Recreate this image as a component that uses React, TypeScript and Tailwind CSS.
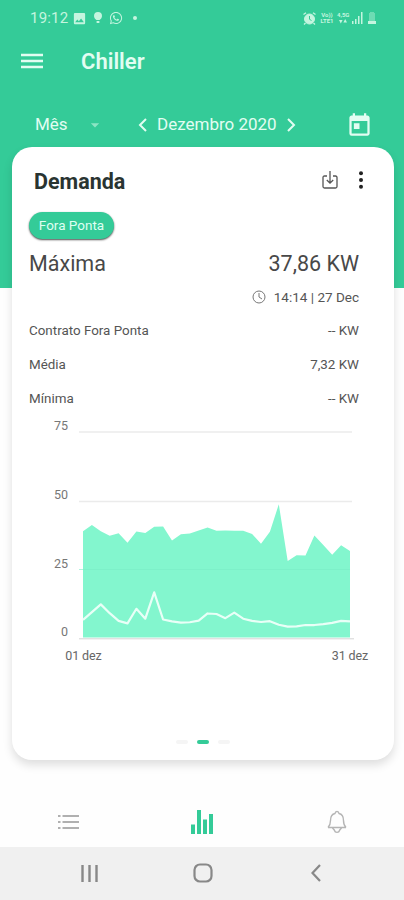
import { FaWhatsapp } from 'react-icons/fa';
import { MdImage, MdToday, MdArrowDropDown } from 'react-icons/md';

const peaks = [
  39, 41.3, 39, 37.4, 38.3, 34.8, 38.9, 38.4, 40.6, 40.7, 35.6, 37.9, 38.2, 39.3, 40.4, 39.2,
  39.3, 39.2, 39.2, 38, 34.5, 38.8, 48.8, 28.2, 30.3, 30.2, 37.5, 34, 30.5, 33.9, 31.8,
];

const averages = [
  6.8, 9.6, 12.4, 9.2, 6.4, 5.5, 10.8, 7.2, 16.8, 6.9, 6.2, 5.8, 5.9, 6.5, 9.1, 8.9,
  7.4, 9.4, 7.2, 6.4, 6, 6.3, 5, 4.3, 4.4, 4.9, 4.9, 5.2, 5.7, 6.4, 6.2,
];

const rows = [
  { label: 'Contrato Fora Ponta', value: '-- KW' },
  { label: 'Média', value: '7,32 KW' },
  { label: 'Mínima', value: '-- KW' },
];

// chart coordinates: 75 is at y=16, 0 is at y=223
const px = (i: number) => 54 + (i * 267) / 30;
const py = (v: number) => 222.5 - v * 2.75;
const toPoints = (values: number[]) => values.map((v, i) => `${px(i)},${py(v)}`).join(' ');

function StatusBar() {
  return (
    <div className="h-9 flex items-center pl-[30px] pr-7 text-[#c4f5df]">
      <span className="text-[15px] tracking-[0.2px] w-[38px]">19:12</span>
      <MdImage className="ml-[4px]" size={15} />
      <svg className="ml-[6px]" width="10" height="14" viewBox="0 0 10 14" fill="currentColor">
        <path d="M5 1a4 4 0 0 0-4 4c0 2 1.3 3 2.4 4h3.2C7.700 8 9 7 9 5a4 4 0 0 0-4-4zM3.600 10h2.800v2H3.600z" />
      </svg>
      <FaWhatsapp className="ml-[6px]" size={14} />
      <span className="ml-[10px] w-1 h-1 rounded-full bg-[#c4f5df]" />
      <div className="ml-auto flex items-center">
        <svg width="13" height="13" viewBox="0 0 13 13" fill="none" stroke="currentColor">
          <circle cx="6.500" cy="7" r="5" fill="currentColor" />
          <path d="M.5 2.500 3 .7M12.500 2.500 10 .7M2.500 11 1 12.500M10.500 11l1.500 1.500" strokeWidth="1.300" />
          <path d="M6.500 4v3.300L8.500 8.500" stroke="#34cb98" />
        </svg>
        <div className="ml-1 w-[14px] text-center text-[6px] leading-[6px] font-bold">
          <div>Vo))</div>
          <div>LTE1</div>
        </div>
        <div className="ml-[3px] w-[12px] text-center text-[6px] leading-[6px] font-bold">
          <div>4,5G</div>
          <svg className="mx-auto" width="8" height="6" viewBox="0 0 8 6" fill="currentColor">
            <path d="M0 2h3.600L1.800 5.500zM4.400 4.500H8L6.200 1z" />
          </svg>
        </div>
        <svg className="ml-[3px]" width="11" height="12" viewBox="0 0 11 12" fill="currentColor">
          <path d="M0 9h1.500v3H0zM3 7h1.500v5H3zM6 4h1.500v8H6zM9 0h1.500v12H9z" />
        </svg>
        <svg className="ml-[5px]" width="8" height="12" viewBox="0 0 8 12" fill="currentColor">
          <path opacity=".4" d="M2 0h4v1h1v8H1V1h1z" />
          <path d="M0 9h8v3H0z" />
        </svg>
      </div>
    </div>
  );
}

function Chart() {
  return (
    <svg
      className="block shrink-0"
      width="347"
      height="252"
      viewBox="0 0 347 252"
      fontFamily="Roboto, sans-serif"
      fontSize="12.500"
      fill="#777777"
    >
      <path d="M50 16h273M50 85.500h273" stroke="#ebebeb" strokeWidth="1.300" />
      <path d="M50 222.800h275" stroke="#d4d4d4" />
      <polygon points={`54,221.5 ${toPoints(peaks)} 321,221.5`} fill="#83f6ce" />
      <path d="M50 153.500h271" stroke="#79edc6" strokeWidth=".6" />
      <polyline points={toPoints(averages)} fill="none" stroke="#e9fff7" strokeWidth="2.200" strokeLinejoin="round" />
      <g textAnchor="end">
        <text x="39" y="14">75</text>
        <text x="39" y="83">50</text>
        <text x="39" y="152">25</text>
        <text x="39" y="220">0</text>
      </g>
      <g textAnchor="middle" fill="#666666">
        <text x="54.500" y="244" textLength="36.500">01 dez</text>
        <text x="321" y="244" textLength="36.500">31 dez</text>
      </g>
    </svg>
  );
}

export default function App() {
  return (
    <div className="w-[404px] h-[900px] flex flex-col overflow-hidden font-[Roboto,sans-serif] bg-[linear-gradient(#34cb98_288.5px,#fefefe_288.5px)]">
      <StatusBar />

      <header className="h-[50px] flex items-center pl-[21px] text-[#e2fdf2]">
        <svg width="22" height="16" viewBox="0 0 22 16" stroke="currentColor" strokeWidth="2.300">
          <path d="M0 2h22M0 8h22M0 14h22" />
        </svg>
        <h1 className="ml-[38px] pt-px text-[22px] font-semibold">Chiller</h1>
      </header>

      <div className="h-[61px] pt-[17px] flex items-center pl-[35px] pr-[31px] text-[#e2fdf2]">
        <span className="w-[50px] text-[17px]">Mês</span>
        <MdArrowDropDown className="text-[#8ce5c4]" size={20} />
        <svg className="ml-[33px]" width="10" height="14" viewBox="0 0 10 14" fill="none" stroke="currentColor" strokeWidth="2">
          <path d="M8 1 2 7l6 6" />
        </svg>
        <span className="ml-[9px] w-[120px] whitespace-nowrap text-[17px]">Dezembro 2020</span>
        <svg className="ml-[9px]" width="10" height="14" viewBox="0 0 10 14" fill="none" stroke="currentColor" strokeWidth="2">
          <path d="m2 1 6 6-6 6" />
        </svg>
        <MdToday className="ml-auto" size={27} />
      </div>

      <main className="ml-[12px] mr-[10px] h-[613px] shrink-0 flex flex-col rounded-[20px] bg-white pl-[17px] pr-[18px] shadow-[0_5px_10px_rgba(0,0,0,0.13)]">
        <div className="h-[65px] pt-[3px] flex items-center pl-[5px]">
          <h2 className="pt-[3px] text-[21.500px] font-bold text-[#293431]">Demanda</h2>
          <svg className="ml-auto mb-[2px]" width="16" height="18" viewBox="0 0 16 18" fill="none" stroke="#555" strokeWidth="1.300">
            <path d="M5 5H2.500Q1 5 1 6.500v9Q1 17 2.500 17h11q1.500 0 1.500-1.500v-9Q15 5 13.500 5H11M8 0v12M4.800 9 8 12.200 11.200 9" />
          </svg>
          <svg className="ml-[21px] mr-[13px] mb-[3px]" width="4" height="18" viewBox="0 0 4 18" fill="#222">
            <circle cx="2" cy="2.200" r="2" />
            <circle cx="2" cy="9" r="2" />
            <circle cx="2" cy="15.800" r="2" />
          </svg>
        </div>
        <span className="h-[27px] w-[85px] flex items-center justify-center rounded-full bg-[#34cb98] text-[13.500px] text-[#dffff2] shadow-[0_1px_2px_rgba(0,0,0,0.7)]">
          Fora Ponta
        </span>
        <div className="h-[50px] flex items-center justify-between pr-[17px] pt-[1px] text-[21.500px] text-[#484848]">
          <span>Máxima</span>
          <span>37,86 KW</span>
        </div>
        <div className="h-[16px] flex items-center justify-end pr-[17px] text-[13.500px] text-[#555]">
          <svg className="mr-2" width="14" height="14" viewBox="0 0 14 14" fill="none" stroke="#777">
            <circle cx="7" cy="7" r="6" />
            <path d="M7 3v4l3 2" />
          </svg>
          14:14 | 27 Dec
        </div>
        <div className="pt-[9px] pr-[17px] text-[13.400px] text-[#555]">
          {rows.map((row) => (
            <div key={row.label} className="h-[34px] flex items-center justify-between">
              <span>{row.label}</span>
              <span>{row.value}</span>
            </div>
          ))}
        </div>
        <Chart />
        <div className="mt-[72px] flex justify-center gap-[9px]">
          <span className="w-3 h-1 rounded-full bg-[#f5f5f5]" />
          <span className="w-3 h-1 rounded-full bg-[#34cb98]" />
          <span className="w-3 h-1 rounded-full bg-[#f5f5f5]" />
        </div>
      </main>

      <nav className="h-[87px] shrink-0 pt-[37px] pl-[1px] grid grid-cols-3 justify-items-center items-center">
        <svg width="21" height="16" viewBox="0 0 21 16" stroke="#b0b0b0" strokeWidth="1.800">
          <path d="M0 2h2.500M4.500 2H21M0 8h2.500M4.500 8H21M0 14h2.500M4.500 14H21" />
        </svg>
        <svg width="22" height="24" viewBox="0 0 22 24" fill="#34cb98">
          <path d="M0 14.500h4V24H0zM6 0h4v24H6zM12 9.500h4V24h-4zM18 4h4v20h-4z" />
        </svg>
        <svg width="20" height="24" viewBox="0 0 20 24" fill="none" stroke="#b5b5b5" strokeWidth="1.400">
          <path d="M1 17.500h18M1 17.500Q3.500 15 3.500 10.500C3.500 6.500 5.500 4 8 3.500Q8.200 1.500 10 1.500T12 3.500c2.500.5 4.500 3 4.500 7Q16.500 15 19 17.500M5.500 18c.8 1.500 1.500.8 2 2.500.5 2.500 4.500 2.500 5 0 .5-1.700 1.200-1 2-2.500" />
        </svg>
      </nav>

      <footer className="h-[53px] shrink-0 bg-[#f0f0f0] flex items-center pl-[81px] text-[#888]">
        <svg width="17" height="17" viewBox="0 0 17 17" stroke="currentColor" strokeWidth="2.400">
          <path d="M1.500 0v17M8.500 0v17M15.500 0v17" />
        </svg>
        <svg className="ml-[95px] mb-px" width="20" height="20" viewBox="0 0 20 20" fill="none" stroke="currentColor" strokeWidth="2.200">
          <rect x="1.500" y="1.500" width="17" height="17" rx="5.500" />
        </svg>
        <svg className="ml-[98px] mb-px" width="10" height="18" viewBox="0 0 10 18" fill="none" stroke="currentColor" strokeWidth="2.200">
          <path d="M9 1 1.500 9 9 17" />
        </svg>
      </footer>
    </div>
  );
}
